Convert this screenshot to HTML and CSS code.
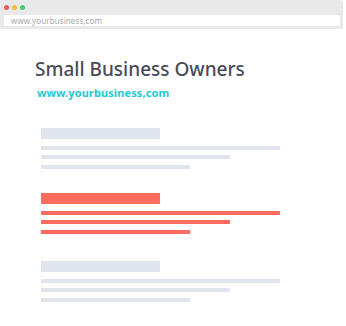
FILE: index.html
```html
<!DOCTYPE html>
<html lang="en">
<head>
  <meta charset="UTF-8" />
  <meta name="viewport" content="width=device-width, initial-scale=1.0" />
  <title>Small Business Owners</title>
  <link rel="stylesheet" href="styles.css">
</head>
<body>
  <div class="window">
    <!-- Browser chrome -->
    <header class="chrome">
      <div class="dots">
        <span class="dot red"></span>
        <span class="dot yellow"></span>
        <span class="dot green"></span>
      </div>
      <div class="address">www.yourbusiness,com</div>
    </header>

    <main class="page">
      <h1 class="title">Small Business Owners</h1>
      <div class="site">www.yourbusiness,com</div>

      <section class="block">
        <div class="bar head"></div>
        <div class="bar line l1"></div>
        <div class="bar line l2"></div>
        <div class="bar line l3"></div>
      </section>

      <section class="block accent">
        <div class="bar head"></div>
        <div class="bar line l1"></div>
        <div class="bar line l2"></div>
        <div class="bar line l3"></div>
      </section>

      <section class="block last">
        <div class="bar head"></div>
        <div class="bar line l1"></div>
        <div class="bar line l2"></div>
        <div class="bar line l3"></div>
      </section>
    </main>
  </div>
</body>
</html>
```
FILE: styles.css
```css
/* Base Reset */
*, *::before, *::after {
  box-sizing: border-box;
  margin: 0;
  padding: 0;
}
body {
  font-family: 'Noto Sans', sans-serif;
  background: #fff;
  color: #474c59;
}

.window {
  width: 346px;
  height: 326px;
  overflow: hidden;
}

/* Browser chrome */
.chrome {
  height: 29px;
  margin-right: 3px;
  background: #e9e9e9;
  border-top-right-radius: 4px;
  padding: 4px 3px 0 4px;
}
.dots {
  display: flex;
  gap: 3px;
  height: 6px;
  margin-bottom: 5px;
  align-items: center;
}
.dot {
  width: 5px;
  height: 5px;
  border-radius: 50%;
}
.dot.red { background: #f0585b; }
.dot.yellow { background: #f1bf30; }
.dot.green { background: #3bcf6d; }

.address {
  height: 11px;
  background: #fff;
  border-radius: 2px;
  font-size: 8px;
  line-height: 11px;
  color: #a8a8a8;
  padding-left: 7px;
  letter-spacing: 0.1px;
}

/* Page content */
.page {
  padding: 28px 0 0 35px;
}
.title {
  font-size: 19px;
  font-weight: 500;
  line-height: 24px;
  color: #474c59;
}
.site {
  margin: 5px 0 0 2px;
  font-size: 11px;
  font-weight: 700;
  line-height: 13px;
  letter-spacing: 0.1px;
  color: #22cbd0;
}

.block {
  display: flex;
  flex-direction: column;
  padding-left: 6px;
  margin-top: 29px;
}
.block.accent { margin-top: 24px; }
.block.last { margin-top: 27px; }
.block .bar { background: #e0e4ec; }
.block.accent .bar { background: #ff6b5c; }

.bar.head {
  width: 119px;
  height: 11px;
  margin-bottom: 7px;
}
.bar.line { height: 4px; }
.bar.l1 { width: 239px; }
.bar.l2 { width: 189px; margin-top: 5px; }
.bar.l3 { width: 149px; margin-top: 6px; }
```
